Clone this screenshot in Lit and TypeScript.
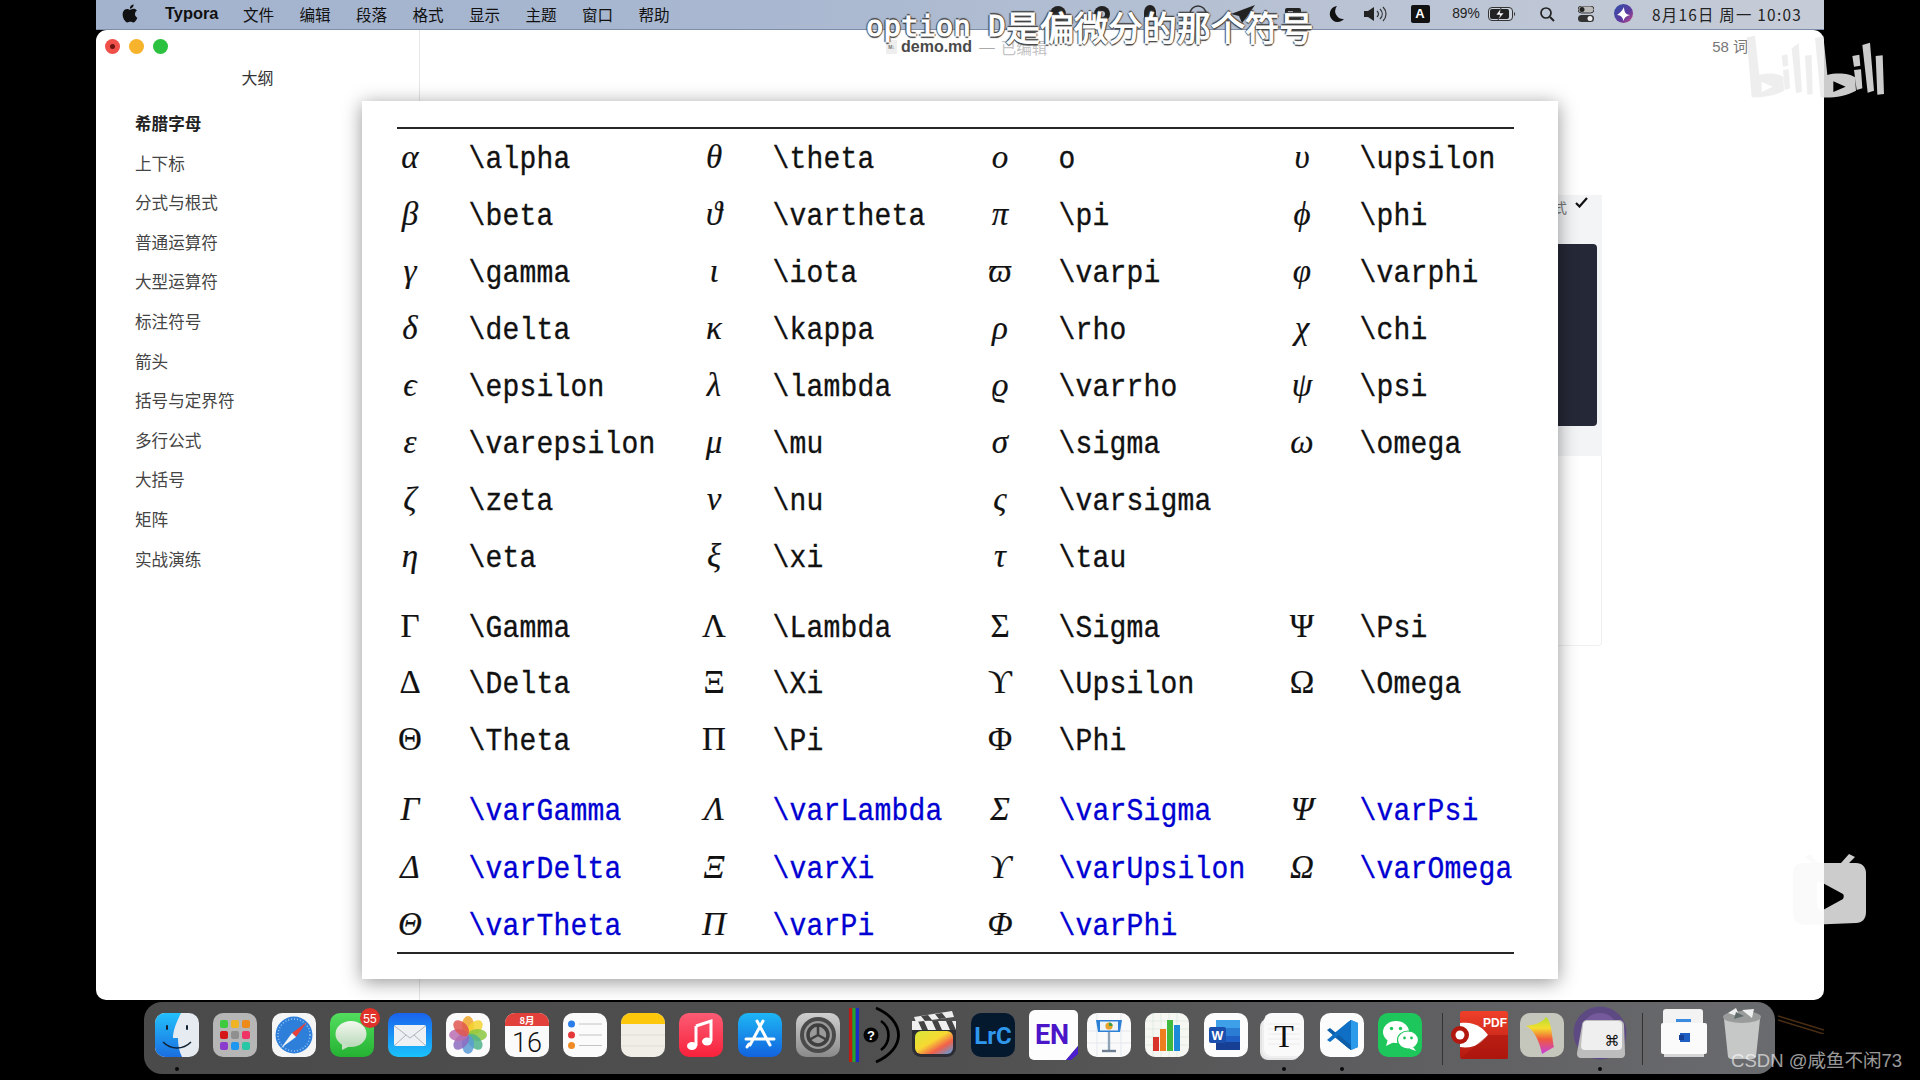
import { LitElement, html, svg, css } from "lit";
import { customElement } from "lit/decorators.js";

type Cell = [string, string];
const g1: Cell[][] = [
  [["α", "\\alpha"], ["θ", "\\theta"], ["o", "o"], ["υ", "\\upsilon"]],
  [["β", "\\beta"], ["ϑ", "\\vartheta"], ["π", "\\pi"], ["ϕ", "\\phi"]],
  [["γ", "\\gamma"], ["ι", "\\iota"], ["ϖ", "\\varpi"], ["φ", "\\varphi"]],
  [["δ", "\\delta"], ["κ", "\\kappa"], ["ρ", "\\rho"], ["χ", "\\chi"]],
  [["ϵ", "\\epsilon"], ["λ", "\\lambda"], ["ϱ", "\\varrho"], ["ψ", "\\psi"]],
  [["ε", "\\varepsilon"], ["μ", "\\mu"], ["σ", "\\sigma"], ["ω", "\\omega"]],
  [["ζ", "\\zeta"], ["ν", "\\nu"], ["ς", "\\varsigma"], ["", ""]],
  [["η", "\\eta"], ["ξ", "\\xi"], ["τ", "\\tau"], ["", ""]],
];
const g2: Cell[][] = [
  [["Γ", "\\Gamma"], ["Λ", "\\Lambda"], ["Σ", "\\Sigma"], ["Ψ", "\\Psi"]],
  [["Δ", "\\Delta"], ["Ξ", "\\Xi"], ["ϒ", "\\Upsilon"], ["Ω", "\\Omega"]],
  [["Θ", "\\Theta"], ["Π", "\\Pi"], ["Φ", "\\Phi"], ["", ""]],
];
const g3: Cell[][] = [
  [["Γ", "\\varGamma"], ["Λ", "\\varLambda"], ["Σ", "\\varSigma"], ["Ψ", "\\varPsi"]],
  [["Δ", "\\varDelta"], ["Ξ", "\\varXi"], ["ϒ", "\\varUpsilon"], ["Ω", "\\varOmega"]],
  [["Θ", "\\varTheta"], ["Π", "\\varPi"], ["Φ", "\\varPhi"], ["", ""]],
];

const outline = ["上下标", "分式与根式", "普通运算符", "大型运算符", "标注符号", "箭头", "括号与定界符", "多行公式", "大括号", "矩阵", "实战演练"];
const menus = ["文件", "编辑", "段落", "格式", "显示", "主题", "窗口", "帮助"];

const tiles: [string, number, number][] = [
  ["#3ccb3f", 7, 7], ["#f0b323", 18, 7], ["#ee8a1a", 29, 7],
  ["#d41717", 7, 18], ["#8f8f8f", 18, 18], ["#ee3565", 29, 18],
  ["#8b3ccf", 7, 29], ["#1f97f0", 18, 29], ["#27c6a4", 29, 29],
];
const petals: [string, number][] = [
  ["#f0a42a", 0], ["#f3d32f", 45], ["#8bc63f", 90], ["#4fb38a", 135], ["#5a9bd5", 180], ["#8d6cbf", 225], ["#b96db0", 270], ["#e0574f", 315],
];

const finder = html`<svg viewBox="0 0 44 44"><rect width="44" height="44" rx="10" fill="#e6ebf2"/><defs><linearGradient id="fa" x1="0" y1="0" x2="0" y2="1"><stop offset="0" stop-color="#23c0fb"/><stop offset="1" stop-color="#1b6ee0"/></linearGradient></defs><path d="M10 0H26C21 10 18 18 18 25H23C23 32 24 38 27 44H10A10 10 0 0 1 0 34V10A10 10 0 0 1 10 0Z" fill="url(#fa)"/><rect x="11" y="12" width="2" height="5" rx="1" fill="#123"/><rect x="31" y="12" width="2" height="5" rx="1" fill="#123"/><path d="M8 29C16 37 28 37 36 29" fill="none" stroke="#123" stroke-width="1.5"/></svg>`;
const launch = html`<svg viewBox="0 0 44 44"><rect width="44" height="44" rx="10" fill="#b6b6b6"/>${tiles.map(([c, x, y]) => svg`<rect x=${x} y=${y} width="8" height="8" rx="2" fill=${c}/>`)}</svg>`;
const safari = html`<svg viewBox="0 0 44 44"><rect width="44" height="44" rx="10" fill="#f5f5f5"/><circle cx="22" cy="22" r="18.5" fill="#2d7fda"/><circle cx="22" cy="22" r="16" fill="none" stroke="#9cc6f2" stroke-width="1.5" stroke-dasharray="1 2"/><path d="M35 9L24 24L20 20Z" fill="#e8413a"/><path d="M9 35L24 24L20 20Z" fill="#f4f4f4"/></svg>`;
const messages = html`<svg viewBox="0 0 44 44"><defs><linearGradient id="ma" x1="0" y1="0" x2="0" y2="1"><stop offset="0" stop-color="#52dd5e"/><stop offset="1" stop-color="#25b233"/></linearGradient><linearGradient id="mb" x1="0" y1="0" x2="0" y2="1"><stop offset="0" stop-color="#f4f8f0"/><stop offset="1" stop-color="#b8d9b8"/></linearGradient></defs><rect width="44" height="44" rx="10" fill="url(#ma)"/><ellipse cx="21" cy="21" rx="15.5" ry="13" fill="url(#mb)"/><path d="M12 29L12 37L20 33Z" fill="#c5dfc2"/><circle cx="40" cy="5" r="10" fill="#e0322a"/><text x="40" y="9.5" text-anchor="middle" font-size="12" font-family="Liberation Sans" fill="#fff">55</text></svg>`;
const mail = html`<svg viewBox="0 0 44 44"><defs><linearGradient id="ml" x1="0" y1="0" x2="0" y2="1"><stop offset="0" stop-color="#1a63ee"/><stop offset="1" stop-color="#1ac3fb"/></linearGradient></defs><rect width="44" height="44" rx="10" fill="url(#ml)"/><rect x="6" y="12" width="32" height="21" rx="2" fill="#eef1f4"/><path d="M6.5 13L22 25L37.5 13M7 32L18 22M37 32L26 22" fill="none" stroke="#aeb4bb" stroke-width="1"/></svg>`;
const photos = html`<svg viewBox="0 0 44 44"><rect width="44" height="44" rx="10" fill="#fbfbfb"/>${petals.map(([c, a]) => svg`<ellipse cx="22" cy="12.5" rx="6" ry="9.5" fill=${c} fill-opacity=".85" transform="rotate(${a} 22 22)"/>`)}</svg>`;
const calendar = html`<svg viewBox="0 0 44 44"><rect width="44" height="44" rx="10" fill="#fafafa"/><path d="M10 0H34A10 10 0 0 1 44 10V13H0V10A10 10 0 0 1 10 0Z" fill="#e2403a"/><text x="22" y="10.5" text-anchor="middle" font-size="9.5" font-weight="700" font-family="Noto Sans CJK SC" fill="#fff">8月</text><text x="22" y="38.500" text-anchor="middle" font-size="27" font-weight="300" font-family="Roboto" fill="#111">16</text></svg>`;
const reminders = html`<svg viewBox="0 0 44 44"><rect width="44" height="44" rx="10" fill="#fbfbfb"/><circle cx="8.5" cy="11" r="3.5" fill="#2b7de9"/><circle cx="8.5" cy="22" r="3.5" fill="#e5383b"/><circle cx="8.5" cy="32.5" r="3.5" fill="#f08a24"/><path d="M16 11H39M16 22H39M16 32.5H39" stroke="#c4c4c4" stroke-width="1"/></svg>`;
const notes = html`<svg viewBox="0 0 44 44"><rect width="44" height="44" rx="10" fill="#f0eee6"/><path d="M10 0H34A10 10 0 0 1 44 10V11H0V10A10 10 0 0 1 10 0Z" fill="#fdc70c"/><path d="M0 22H44M0 33H44" stroke="#e0ddd3" stroke-width="1"/></svg>`;
const music = html`<svg viewBox="0 0 44 44"><defs><linearGradient id="mu" x1="0" y1="0" x2="0" y2="1"><stop offset="0" stop-color="#fb5c74"/><stop offset="1" stop-color="#f9213b"/></linearGradient></defs><rect width="44" height="44" rx="10" fill="url(#mu)"/><path d="M17 13L32 8V28" fill="none" stroke="#fff" stroke-width="3"/><path d="M17 13V33" stroke="#fff" stroke-width="3"/><ellipse cx="13" cy="33" rx="5" ry="4" fill="#fff"/><ellipse cx="28" cy="28.5" rx="5" ry="4" fill="#fff"/></svg>`;
const appstore = html`<svg viewBox="0 0 44 44"><defs><linearGradient id="as" x1="0" y1="0" x2="0" y2="1"><stop offset="0" stop-color="#1db6f5"/><stop offset="1" stop-color="#1263de"/></linearGradient></defs><rect width="44" height="44" rx="10" fill="url(#as)"/><path d="M25 8L12 32M19 8L32 32M8 26H36M9 34L11 31" fill="none" stroke="#fff" stroke-width="3" stroke-linecap="round"/></svg>`;
const settings = html`<svg viewBox="0 0 44 44"><defs><linearGradient id="st" x1="0" y1="0" x2="0" y2="1"><stop offset="0" stop-color="#cfcfcf"/><stop offset="1" stop-color="#8a8a8a"/></linearGradient></defs><rect width="44" height="44" rx="10" fill="url(#st)"/><circle cx="22" cy="22" r="18" fill="#4a4a4a"/><circle cx="22" cy="22" r="14" fill="#9a9a9a"/><circle cx="22" cy="22" r="10" fill="none" stroke="#3f3f3f" stroke-width="3.5"/><path d="M22 22L22 12M22 22L13 27M22 22L31 27" stroke="#3f3f3f" stroke-width="2.5"/></svg>`;
const unknown = html`<svg viewBox="0 0 44 44"><rect x="-5" y="-5" width="3.4" height="54" fill="#c11c12"/><rect x="-1.6" y="-5" width="3.3" height="54" fill="#25a32a"/><rect x="1.700" y="-5" width="3.3" height="54" fill="#1c2ac8"/><circle cx="17" cy="22" r="7.5" fill="#050505"/><text x="17" y="27" text-anchor="middle" font-size="13" font-weight="700" font-family="Liberation Sans" fill="#fff">?</text><path d="M27 8C37 15 37 29 27 37" fill="none" stroke="#000" stroke-width="2.600"/><path d="M22 -5C52 8 52 36 22 49" fill="none" stroke="#000" stroke-width="2.800"/></svg>`;
const fcp = html`<svg viewBox="0 0 44 44"><defs><linearGradient id="fc" x1="0" y1="0" x2="1" y2="1"><stop offset="0" stop-color="#d8e93a"/><stop offset=".45" stop-color="#f7d832"/><stop offset=".7" stop-color="#f2604a"/><stop offset="1" stop-color="#4aa4ee"/></linearGradient></defs><rect x="0" y="8" width="44" height="36" rx="9" fill="#2c2c34"/><rect x="3" y="18" width="38" height="23" rx="6" fill="url(#fc)"/><rect x="0" y="8" width="44" height="9" fill="#f0f0f0"/><path d="M6 8h6l4 9H10zM20 8h6l4 9h-6zM34 8h6l4 9h-6z" fill="#444"/><path d="M2 4L40 -2L42 4L4 9Z" fill="#eee"/><path d="M9 3L16 2L20 7L13 8ZM23 1L30 0L34 5L27 6Z" fill="#444"/></svg>`;
const lrc = html`<svg viewBox="0 0 44 44"><rect width="44" height="44" rx="10" fill="#04182e"/><text x="22" y="31" text-anchor="middle" font-size="24" font-weight="700" font-family="Roboto" fill="#2f97ec">LrC</text></svg>`;
const en = html`<svg viewBox="0 0 44 44"><path d="M6 -3H44A5 5 0 0 1 49 2V33L37 47H5A5 5 0 0 1 0 42V3A6 6 0 0 1 6 -3Z" fill="#fdfdfd"/><path d="M49 33L37 47H42L49 41Z" fill="#4b1fd0"/><text x="23" y="31" text-anchor="middle" font-size="27" font-weight="700" font-family="Roboto" fill="#4b16c8">EN</text></svg>`;
const keynote = html`<svg viewBox="0 0 44 44"><rect width="44" height="44" rx="10" fill="#fafafa"/><path d="M0 18H44M0 30H44M10 0V44M34 0V44" stroke="#e3e8ef" stroke-width="1"/><path d="M9 7H35L33 19H11Z" fill="#2c81d6"/><rect x="13" y="8.500" width="18" height="9" fill="#eef3f7"/><circle cx="22" cy="13" r="3.600" fill="#e6a32c"/><path d="M22 13L22 9.400A3.600 3.600 0 0 1 25.600 13Z" fill="#3a9c4b"/><path d="M22 19V37" stroke="#8ea3b8" stroke-width="2.400"/><path d="M15 38H29" stroke="#6e7f91" stroke-width="2.400"/></svg>`;
const numbers = html`<svg viewBox="0 0 44 44"><rect width="44" height="44" rx="10" fill="#f6f7f3"/><path d="M0 8H44M0 16H44M0 24H44M0 32H44M8 0V44M16 0V44M24 0V44M32 0V44" stroke="#d8e8d8" stroke-width=".7"/><rect x="8" y="24" width="6" height="14" fill="#d9342b"/><rect x="15" y="16" width="6" height="22" fill="#ee7f1e"/><rect x="22" y="7" width="6" height="31" fill="#3fba3f"/><rect x="29" y="12" width="6" height="26" fill="#1e8bd8"/></svg>`;
const word = html`<svg viewBox="0 0 44 44"><rect width="44" height="44" rx="10" fill="#fcfcfc"/><path d="M15 7H33A3 3 0 0 1 36 10V34A3 3 0 0 1 33 37H15A3 3 0 0 1 12 34V10A3 3 0 0 1 15 7Z" fill="#1f5fc4"/><rect x="12" y="7" width="24" height="8" fill="#3fa0ea"/><rect x="12" y="15" width="24" height="8" fill="#2b7cd3"/><rect x="12" y="29" width="24" height="8" fill="#173f94"/><rect x="5" y="14" width="17" height="16" rx="2" fill="#1b4fad"/><text x="13.500" y="26.500" text-anchor="middle" font-size="12.500" font-weight="700" font-family="Liberation Sans" fill="#fff">W</text></svg>`;
const typora = html`<svg viewBox="0 0 44 44"><rect x="-2" y="6" width="40" height="41" rx="8" fill="#e4e4e4"/><rect x="0" y="4" width="40" height="41" rx="8" fill="#efefef"/><rect x="2" y="0" width="40" height="43" rx="8" fill="#fafafa"/><path d="M6 11H38M6 16H38M6 21H38M6 26H38M6 31H38" stroke="#ececec"/><text x="22" y="34" text-anchor="middle" font-size="32" font-family="Liberation Serif" fill="#111">T</text></svg>`;
const vscode = html`<svg viewBox="0 0 44 44"><rect width="44" height="44" rx="10" fill="#fcfcfc"/><path d="M31 7L38 10V34L31 37L12 22Z" fill="#0f6fc4"/><path d="M31 7L38 10V34L31 37Z" fill="#2c9bea"/><path d="M7 17L10 15L31 32V37L28 35Z" fill="#0d5ea8"/><path d="M7 27L10 29L31 12V7L28 9Z" fill="#0f6fc4"/></svg>`;
const wechat = html`<svg viewBox="0 0 44 44"><rect width="44" height="44" rx="10" fill="#1dc75c"/><ellipse cx="18" cy="19" rx="13" ry="11" fill="#fff"/><path d="M10 26L8 33L16 29Z" fill="#fff"/><circle cx="13.500" cy="15.500" r="1.700" fill="#1dc75c"/><circle cx="22.500" cy="15.500" r="1.700" fill="#1dc75c"/><ellipse cx="30" cy="27" rx="10.500" ry="9" fill="#fff" stroke="#1dc75c" stroke-width="1.200"/><path d="M35 34L38 38L31 35.500Z" fill="#fff"/><circle cx="26.500" cy="25" r="1.400" fill="#1dc75c"/><circle cx="33.500" cy="25" r="1.400" fill="#1dc75c"/></svg>`;
const pdf = html`<svg viewBox="0 0 48 48" class="big"><defs><linearGradient id="pd" x1="0" y1="0" x2="0" y2="1"><stop offset="0" stop-color="#f0402a"/><stop offset="1" stop-color="#b3180f"/></linearGradient></defs><rect x="0" y="0" width="48" height="48" rx="3" fill="url(#pd)"/><path d="M0 12C16 10 24 18 28 24C22 32 14 38 0 36Z" fill="#fff"/><circle cx="0" cy="24" r="9" fill="#b3180f"/><circle cx="0" cy="24" r="4.500" fill="#fff"/><path d="M0 48L28 24L48 24V48Z" fill="#a8150d" fill-opacity=".6"/><text x="35" y="16" text-anchor="middle" font-size="12" font-weight="700" font-family="Liberation Sans" fill="#fff">PDF</text></svg>`;
const rainbow = html`<svg viewBox="0 0 44 44"><defs><linearGradient id="rb" x1="0" y1="0" x2="0" y2="1"><stop offset="0" stop-color="#b4dc30"/><stop offset=".3" stop-color="#f5df2e"/><stop offset=".6" stop-color="#f15a3c"/><stop offset="1" stop-color="#c33fe0"/></linearGradient></defs><rect width="44" height="44" rx="10" fill="#c6c7bc"/><path d="M6 13C14 12 22 10 26 4C32 8 32 26 34 34L22 41C20 30 14 16 6 13Z" fill="url(#rb)"/></svg>`;
const keyboard = html`<svg viewBox="0 0 44 44"><circle cx="22" cy="20" r="26.500" fill="#5e4a82"/><circle cx="22" cy="18" r="18" fill="#74599c"/><path d="M4 12A5 5 0 0 1 9 7H41A5 5 0 0 1 46 12L47 40A4 4 0 0 1 43 45H3A4 4 0 0 1 -1 40Z" fill="#bdbdbd"/><path d="M5 12A4 4 0 0 1 9 8H40A4 4 0 0 1 44 12V33A4 4 0 0 1 40 37H6A4 4 0 0 1 3 33Z" fill="#efefef"/><text x="34" y="33" text-anchor="middle" font-size="15" font-family="DejaVu Sans" fill="#111">⌘</text></svg>`;
const folder = html`<svg viewBox="0 0 44 44"><rect x="1" y="-4" width="40" height="30" rx="3" fill="#f3f3f3"/><rect x="14" y="6" width="15" height="3" fill="#3b8be0"/><rect x="-1" y="10" width="46" height="31" rx="2" fill="#fbfbfb"/><rect x="2" y="41" width="40" height="3" fill="#d5d5d5"/><rect x="18" y="20" width="10" height="9" fill="#1f5fc4"/><rect x="17" y="22" width="5" height="5" fill="#173f94"/></svg>`;
const trash = html`<svg viewBox="0 0 44 44"><path d="M4 6H40L36 44A4 4 0 0 1 32 46H12A4 4 0 0 1 8 44Z" fill="#c6c7c7"/><ellipse cx="22" cy="4" rx="19" ry="6" fill="#9a9c9c"/><path d="M8 0L16 -5L20 4ZM22 -3L34 -4L32 5Z" fill="#eef0f0"/><path d="M16 -1L24 3L14 6Z" fill="#5f6b6b"/></svg>`;

const dockApps = [
  { i: finder, run: true }, { i: launch }, { i: safari }, { i: messages }, { i: mail }, { i: photos }, { i: calendar }, { i: reminders }, { i: notes },
  { i: music }, { i: appstore }, { i: settings }, { i: unknown }, { i: fcp }, { i: lrc }, { i: en }, { i: keynote }, { i: numbers },
  { i: word }, { i: typora, run: true }, { i: vscode, run: true }, { i: wechat },
];
const dockApps2 = [{ i: pdf }, { i: rainbow }, { i: keyboard, run: true }];
const dockApps3 = [{ i: folder }, { i: trash }];

@customElement("app-root")
export class AppRoot extends LitElement {
  static styles = css`
    :host { display: block; width: 1920px; height: 1080px; background: #000; position: relative; overflow: hidden; font-family: "Noto Sans CJK SC", sans-serif; }
    .screen { width: 1728px; height: 1080px; margin-left: 96px; display: flex; flex-direction: column; position: relative; }
    .menubar { height: 30px; flex: none; display: flex; align-items: center; padding-bottom: 2px; background: linear-gradient(90deg, #a3b3ce 0%, #a9b8d0 40%, #c6ccd7 100%); border-bottom: 1px solid #7e8ea8; box-sizing: border-box; color: #111; font-size: 15.6px; }
    .apple { width: 18px; height: 21px; margin-left: 25px; flex: none; fill: #111; }
    .app { font-family: "Liberation Sans", sans-serif; font-weight: 700; font-size: 16.4px; margin-left: 26px; width: 78px; flex: none; }
    .menu { width: 56.5px; flex: none; line-height: 20px; }
    .status { margin-left: auto; display: grid; grid-template-columns: 44px 44px 52px 44px 46px 54px 34px 42px 48px 44px 28px 62px 16px 58px 172px; align-items: center; justify-items: center; height: 27px; }
    .status svg { display: block; }
    .pct { font-family: "Liberation Sans", sans-serif; font-size: 13.8px; color: #222; }
    .akey { width: 19px; height: 18px; background: #111; color: #fff; border-radius: 2px; font: 700 13px/18px "Liberation Sans", sans-serif; text-align: center; }
    .clock { justify-self: start; font-size: 15.4px; letter-spacing: 1.25px; white-space: nowrap; color: #222; }

    .window { height: 970px; flex: none; background: #fff; border-radius: 11px 11px 10px 10px; display: flex; position: relative; overflow: hidden; }
    .sidebar { width: 324px; flex: none; box-sizing: border-box; border-right: 1px solid #e6e6e6; display: flex; flex-direction: column; }
    .lights { display: flex; gap: 9px; padding: 9px 0 0 9px; }
    .light { width: 15px; height: 15px; border-radius: 50%; display: flex; align-items: center; justify-content: center; }
    .light.r { background: #f0504a; }
    .light.r::after { content: ""; width: 5px; height: 5px; border-radius: 50%; background: #6b1512; }
    .light.y { background: #f6b32b; }
    .light.g { background: #2cc23f; }
    .otitle { text-align: center; font-size: 16px; line-height: 24px; margin-top: 11px; color: #333; }
    .nav { margin-top: 15px; padding-left: 39px; display: flex; flex-direction: column; }
    .nav div { height: 39.6px; line-height: 39.6px; font-size: 16.6px; color: #444; }
    .nav div.on { font-weight: 700; color: #222; }
    .main { flex: 1; min-width: 0; display: flex; flex-direction: column; }
    .title { display: flex; align-items: center; height: 16px; padding: 9px 76px 4px 466px; font-size: 15.5px; line-height: 16px; }
    .docicon { width: 11px; height: 14px; background: #eee; border-radius: 1px; margin-right: 4px; flex: none; color: #777; font: 700 5px/14px "Liberation Sans", sans-serif; text-align: center; }
    .docname { font-family: "Liberation Sans", sans-serif; font-weight: 700; color: #4a4a4a; font-size: 16px; }
    .dash { color: #aaa; margin-left: 7px; font-family: "Liberation Sans", sans-serif; }
    .edited { color: #c4c4c4; margin-left: 6px; font-size: 15.5px; }
    .words { margin-left: auto; color: #777; font-size: 15px; font-family: "Liberation Sans", "Noto Sans CJK SC", sans-serif; }
    .panels { margin: 136px 222px 0 auto; width: 300px; }
    .gray { background: #f3f4f6; height: 261px; box-sizing: border-box; padding: 0 5px 0 0; display: flex; flex-direction: column; }
    .opt { height: 49px; display: flex; justify-content: flex-end; align-items: flex-start; gap: 8px; padding: 2px 9px 0 0; font-size: 14px; line-height: 20px; color: #777; box-sizing: border-box; }
    .dark { height: 182px; background: #252836; border-radius: 4px; }
    .blank { height: 190px; box-sizing: border-box; border: 1px solid #f0f0f0; border-top: none; border-radius: 0 0 4px 4px; }

    .card { position: absolute; left: 266px; top: 71px; width: 1196px; height: 878px; box-sizing: border-box; padding: 26px 44px 0 35px; background: #fff; box-shadow: 0 3px 18px rgba(0, 0, 0, .42); }
    .rule { height: 2px; background: #262626; }
    .grid { display: grid; grid-template-columns: 26px 278px 26px 260px 26px 277px 24px 200px; grid-auto-rows: 56.9px; align-items: center; }
    .g2 { margin-top: 13px; }
    .g3 { margin-top: 13px; grid-auto-rows: 57.2px; }
    .sym { font: italic 33px/40px "Liberation Serif", "DejaVu Serif", serif; color: #111; -webkit-text-stroke: .2px #111; text-align: center; white-space: nowrap; display: flex; justify-content: center; }
    .up .sym { font-style: normal; }
    .code { font: 28px/40px "Liberation Mono", monospace; color: #111; margin-left: 45.5px; white-space: nowrap; letter-spacing: .2px; -webkit-text-stroke: .3px currentColor; transform-origin: left center; transform: translateY(2.7px) scaleY(1.12); }
    .blue .code { color: #0000d2; }

    .dockarea { flex: 1; position: relative; padding: 2px 0 0 48px; }
    .dock { width: 1631px; height: 72px; box-sizing: border-box; padding: 11px 0 0 11px; border-radius: 18px; background: linear-gradient(90deg, #4a4a4a 0%, #505050 50%, #6a6b6e 100%); display: flex; gap: 14.25px; align-items: flex-start; }
    .ico { width: 44px; height: 44px; flex: none; position: relative; }
    .ico svg { width: 44px; height: 44px; display: block; overflow: visible; }
    .ico svg.big { width: 48px; height: 48px; margin: -2px; }
    .ico.run::after { content: ""; position: absolute; left: 20px; top: 54px; width: 4px; height: 4px; border-radius: 50%; background: #0a0a0a; }
    .sep { width: 1px; height: 52px; background: #333; flex: none; margin: 0 5px 0 5px; }
    .wall { position: absolute; left: 1682px; top: 14px; width: 46px; height: 20px; }

    .subtitle { position: absolute; left: 866px; top: 12.5px; white-space: nowrap; color: #fff; display: flex; align-items: center; height: 26px; -webkit-text-stroke: 1.1px #fff; text-shadow: 1.6px 0 1px #444, -1.6px 0 1px #444, 0 1.6px 1px #444, 0 -1.6px 1px #444; }
    .subtitle .l { display: block; font: 29px/26px "DejaVu Sans Mono", monospace; }
    .subtitle .c { display: block; font: 34.2px/26px "Noto Sans CJK SC", sans-serif; }
    .logo { position: absolute; left: 1700px; top: 20px; width: 220px; height: 90px; }
    .tv { position: absolute; left: 1792px; top: 854px; width: 74px; height: 71px; }
    .csdn { position: absolute; right: 18px; bottom: 7px; font: 18.5px/24px "Liberation Sans", "Noto Sans CJK SC", sans-serif; color: rgba(255, 255, 255, .62); white-space: nowrap; }
  `;

  private group(rows: Cell[][], cls: string) {
    return html`<div class="grid ${cls}">
      ${rows.map((r) => r.map(([s, c]) => html`<span class="sym">${s}</span><span class="code">${c}</span>`))}
    </div>`;
  }

  private ico(a: { i: unknown; run?: boolean }) {
    return html`<div class="ico ${a.run ? "run" : ""}">${a.i}</div>`;
  }

  render() {
    return html`
      <div class="screen">
        <div class="menubar">
          <svg class="apple" viewBox="0 0 24 24"><path d="M12.152 6.896c-.948 0-2.415-1.078-3.96-1.04-2.04.027-3.91 1.183-4.961 3.014-2.117 3.675-.546 9.103 1.519 12.09 1.013 1.454 2.208 3.09 3.792 3.039 1.52-.065 2.09-.987 3.935-.987 1.831 0 2.35.987 3.96.948 1.637-.026 2.676-1.48 3.676-2.948 1.156-1.688 1.636-3.325 1.662-3.415-.039-.013-3.182-1.221-3.22-4.857-.026-3.04 2.48-4.494 2.597-4.559-1.429-2.09-3.623-2.324-4.39-2.376-2-.156-3.675 1.09-4.61 1.09zM15.53 3.83c.843-1.012 1.4-2.427 1.245-3.83-1.207.052-2.662.805-3.532 1.818-.78.896-1.454 2.338-1.273 3.714 1.338.104 2.715-.688 3.559-1.701"/></svg>
          <span class="app">Typora</span>
          ${menus.map((m) => html`<span class="menu">${m}</span>`)}
          <div class="status">
            <svg width="22" height="20" viewBox="0 0 22 20"><circle cx="11" cy="10" r="8" fill="#222"/></svg>
            <svg width="22" height="20" viewBox="0 0 22 20"><circle cx="11" cy="10" r="8" fill="#222"/><circle cx="11" cy="10" r="3" fill="#bcc6d6"/></svg>
            <svg width="18" height="20" viewBox="0 0 18 20"><path d="M9 1C13 1 15 5 15 9V18H3V9C3 5 5 1 9 1Z" fill="#222"/></svg>
            <svg width="22" height="20" viewBox="0 0 22 20"><circle cx="11" cy="10" r="8" fill="none" stroke="#333" stroke-width="1.500"/></svg>
            <svg width="26" height="20" viewBox="0 0 26 20"><path d="M25 1L1 10L9 12L12 19L16 14Z" fill="#222"/></svg>
            <svg width="16" height="12" viewBox="0 0 16 12"><rect width="16" height="12" rx="2" fill="#222"/><rect x="3" y="3" width="5" height="3" fill="#ccd"/></svg>
            <svg width="16" height="18" viewBox="0 0 16 18"><path d="M8 1A8 8 0 1 0 15 14A8 8 0 0 1 8 1Z" fill="#111"/></svg>
            <svg width="24" height="16" viewBox="0 0 24 16"><path d="M1 5H5L11 1V15L5 11H1Z" fill="#222"/><path d="M14 5C16 7 16 9 14 11M17 3C20 6 20 10 17 13M20 1C24 5 24 11 20 15" fill="none" stroke="#333" stroke-width="1.200"/></svg>
            <div class="akey">A</div>
            <span class="pct">89%</span>
            <svg width="28" height="14" viewBox="0 0 28 14"><rect x=".5" y=".5" width="24" height="13" rx="3.500" fill="#ccd2dc" stroke="#333"/><rect x="2" y="2" width="19" height="10" rx="2" fill="#222"/><path d="M26 5V9C27.500 8.500 27.500 5.500 26 5Z" fill="#333"/><path d="M13 1L8 8H12L10 13L16 6H12Z" fill="#fff" stroke="#222" stroke-width=".6"/></svg>
            <svg width="16" height="16" viewBox="0 0 16 16"><circle cx="7" cy="7" r="5" fill="none" stroke="#222" stroke-width="1.700"/><path d="M11 11L15 15" stroke="#222" stroke-width="2"/></svg>
            <svg width="16" height="16" viewBox="0 0 16 16"><rect x="0" y="0" width="16" height="7" rx="3.500" fill="#bbb" stroke="#333"/><circle cx="4" cy="3.500" r="2.500" fill="#222"/><rect x="0" y="9" width="16" height="7" rx="3.500" fill="#333"/><circle cx="12" cy="12.500" r="2.500" fill="#eee"/></svg>
            <svg width="19" height="19" viewBox="0 0 19 19"><defs><linearGradient id="si" x1="0" y1="0" x2="1" y2="1"><stop offset="0" stop-color="#2e4fa8"/><stop offset=".6" stop-color="#5d3aa0"/><stop offset="1" stop-color="#d14a80"/></linearGradient></defs><circle cx="9.500" cy="9.500" r="9.500" fill="url(#si)"/><path d="M3 11C6 9 8 7 10 3C10 8 12 11 16 11C12 12 10 14 9.500 17C9 14 7 11 3 11Z" fill="#fff"/></svg>
            <span class="clock">8月16日 周一 10:03</span>
          </div>
        </div>
        <div class="window">
          <aside class="sidebar">
            <div class="lights"><i class="light r"></i><i class="light y"></i><i class="light g"></i></div>
            <div class="otitle">大纲</div>
            <nav class="nav">
              <div class="on">希腊字母</div>
              ${outline.map((o) => html`<div>${o}</div>`)}
            </nav>
          </aside>
          <div class="main">
            <div class="title">
              <span class="docicon">M↓</span><span class="docname">demo.md</span><span class="dash">—</span><span class="edited">已编辑</span>
              <span class="words">58 词</span>
            </div>
            <div class="panels">
              <div class="gray">
                <div class="opt"><span>式</span><svg width="13" height="11" viewBox="0 0 13 11"><path d="M1 6L4.500 9.500L12 1" fill="none" stroke="#111" stroke-width="2.200"/></svg></div>
                <div class="dark"></div>
              </div>
              <div class="blank"></div>
            </div>
          </div>
          <section class="card">
            <div class="rule"></div>
            ${this.group(g1, "")}
            ${this.group(g2, "g2 up")}
            ${this.group(g3, "g3 blue")}
            <div class="rule"></div>
          </section>
        </div>
        <div class="dockarea">
          <div class="dock">
            ${dockApps.map((a) => this.ico(a))}
            <div class="sep"></div>
            ${dockApps2.map((a) => this.ico(a))}
            <div class="sep"></div>
            ${dockApps3.map((a) => this.ico(a))}
          </div>
          <svg class="wall" viewBox="0 0 46 20"><path d="M0 2L46 16M0 6L46 20" stroke="#4a2e14" stroke-width="1.500"/></svg>
        </div>
      </div>
      <div class="subtitle"><span class="l">option D</span><span class="c">是偏微分的那个符号</span></div>
      <svg class="logo" viewBox="0 0 660 270"><path fill="rgba(235,235,235,.867)" fill-rule="evenodd" d="M140 52L165 47L178 165C205 157 240 160 250 172L252 212C225 228 185 233 155 232ZM185 185V216L218 200ZM245 107L262 103L265 137L249 140ZM249 150L266 148L270 205L254 210ZM275 85L296 70L306 215L288 220ZM315 107L335 105L338 222L322 224ZM345 55L370 47L382 165C410 157 450 160 465 172L468 212C440 228 395 235 362 232ZM400 184V216L437 200ZM457 108L478 104L481 137L462 140ZM462 150L483 148L487 205L470 210ZM487 75L510 68L522 212L503 218ZM527 108L548 106L552 222L532 224Z"/></svg>
      <svg class="tv" viewBox="0 0 74 71"><path fill="rgba(249,249,249,.82)" fill-rule="evenodd" d="M18 0L26 9H49L57 0L63 3L57 9H64C70 9 74 13 74 19V58C74 65 70 69 64 69L14 71C5 71 1 66 1 58V19C1 13 5 9 11 9H20L13 3ZM27 27C25 27 25 29 25 32V50C25 54 27 56 31 56L51 45C52 43 52 41 51 40L27 27Z"/></svg>
      <div class="csdn">CSDN @咸鱼不闲73</div>
    `;
  }
}
